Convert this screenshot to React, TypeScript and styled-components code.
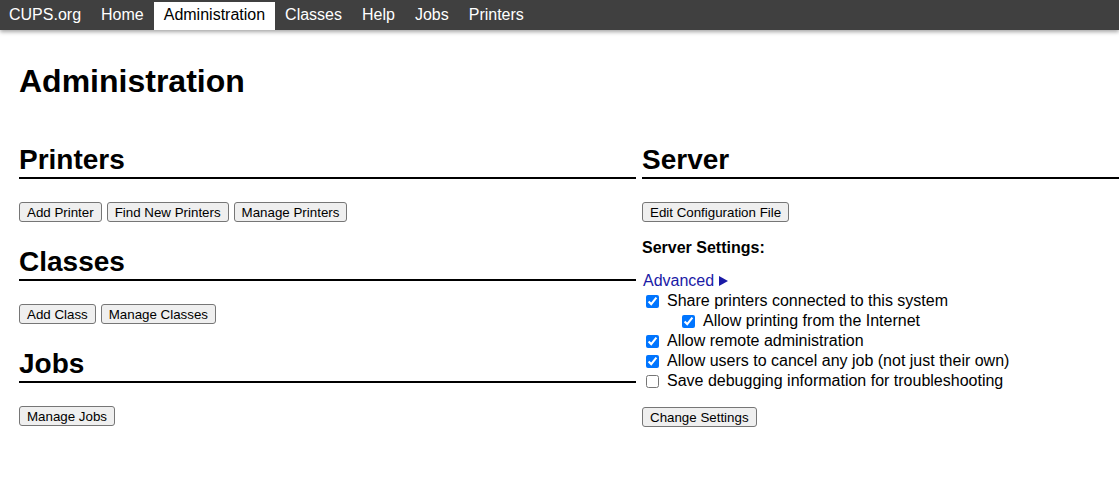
import React from "react";
import styled, { createGlobalStyle } from "styled-components";

const GlobalStyle = createGlobalStyle`
  html, body { margin: 0; padding: 0; background: #fff; }
  body { font-family: "Liberation Sans", Arial, sans-serif; color: #000; }
`;

const NavBar = styled.nav`
  display: flex;
  height: 30px;
  background: #404040;
  box-shadow: 0 2px 4px rgba(0, 0, 0, 0.35);
`;

const NavLink = styled.a<{ $active?: boolean }>`
  display: block;
  padding: 0 10px;
  line-height: 30px;
  font-size: 16px;
  text-decoration: none;
  color: ${(p) => (p.$active ? "#000" : "#fff")};
  background: ${(p) => (p.$active ? "linear-gradient(#404040 0 2px, #fff 2px)" : "transparent")};

  &:first-child {
    padding-left: 9px;
  }
`;

const Main = styled.main`
  padding: 33px 0 0 19px;
`;

const Title = styled.h1`
  margin: 0 0 44px;
  font-size: 32px;
  line-height: 37px;
  font-weight: bold;
`;

const Columns = styled.div`
  display: flex;
  gap: 6px;
`;

const LeftColumn = styled.div`
  width: 617px;
  flex: none;
`;

const RightColumn = styled.div`
  flex: 1;
  min-width: 0;
`;

const Section = styled.section`
  padding-bottom: 24px;
`;

const SectionTitle = styled.h2`
  margin: 0 0 23px;
  font-size: 28px;
  line-height: 32px;
  padding-bottom: 1px;
  font-weight: bold;
  border-bottom: 2px solid #000;
`;

const ButtonRow = styled.div`
  display: flex;
  gap: 5px;
`;

const Button = styled.button`
  height: 20px;
  padding: 0 7px;
  margin: 0;
  font-family: "Liberation Sans", Arial, sans-serif;
  font-size: 13.33px;
  color: #000;
  background: #efefef;
  border: 1px solid #767676;
  border-radius: 3px;
`;

const SubHeading = styled.div`
  margin-top: 16px;
  font-size: 16px;
  line-height: 20px;
  font-weight: bold;
`;

const AdvancedLink = styled.a`
  display: flex;
  align-items: center;
  gap: 5px;
  margin-top: 13px;
  padding-left: 1px;
  font-size: 16px;
  line-height: 20px;
  color: #1a1aa6;
  text-decoration: none;
`;

const CheckRow = styled.label<{ $nested?: boolean }>`
  display: flex;
  align-items: center;
  gap: 8px;
  height: 20px;
  padding-left: ${(p) => (p.$nested ? 40 : 4)}px;
  font-size: 16px;
  line-height: 20px;
`;

const CheckBox = styled.input`
  margin: 0;
  width: 13px;
  height: 13px;
`;

const SubmitRow = styled.div`
  margin-top: 16px;
`;

const navItems = ["CUPS.org", "Home", "Administration", "Classes", "Help", "Jobs", "Printers"];

const settings: { label: string; checked: boolean; nested?: boolean }[] = [
  { label: "Share printers connected to this system", checked: true },
  { label: "Allow printing from the Internet", checked: true, nested: true },
  { label: "Allow remote administration", checked: true },
  { label: "Allow users to cancel any job (not just their own)", checked: true },
  { label: "Save debugging information for troubleshooting", checked: false },
];

const Triangle = () => (
  <svg width="9" height="10" viewBox="0 0 9 10" aria-hidden="true">
    <path d="M0 0 L9 5 L0 10 Z" fill="#1a1aa6" />
  </svg>
);

export default function App() {
  return (
    <>
      <GlobalStyle />
      <NavBar>
        {navItems.map((item) => (
          <NavLink key={item} href="#" $active={item === "Administration"}>
            {item}
          </NavLink>
        ))}
      </NavBar>
      <Main>
        <Title>Administration</Title>
        <Columns>
          <LeftColumn>
            <Section>
              <SectionTitle>Printers</SectionTitle>
              <ButtonRow>
                <Button>Add Printer</Button>
                <Button>Find New Printers</Button>
                <Button>Manage Printers</Button>
              </ButtonRow>
            </Section>
            <Section>
              <SectionTitle>Classes</SectionTitle>
              <ButtonRow>
                <Button>Add Class</Button>
                <Button>Manage Classes</Button>
              </ButtonRow>
            </Section>
            <Section>
              <SectionTitle>Jobs</SectionTitle>
              <ButtonRow>
                <Button>Manage Jobs</Button>
              </ButtonRow>
            </Section>
          </LeftColumn>
          <RightColumn>
            <SectionTitle>Server</SectionTitle>
            <ButtonRow>
              <Button>Edit Configuration File</Button>
            </ButtonRow>
            <SubHeading>Server Settings:</SubHeading>
            <AdvancedLink href="#">
              Advanced <Triangle />
            </AdvancedLink>
            {settings.map((s) => (
              <CheckRow key={s.label} $nested={s.nested}>
                <CheckBox type="checkbox" defaultChecked={s.checked} />
                {s.label}
              </CheckRow>
            ))}
            <SubmitRow>
              <Button>Change Settings</Button>
            </SubmitRow>
          </RightColumn>
        </Columns>
      </Main>
    </>
  );
}
